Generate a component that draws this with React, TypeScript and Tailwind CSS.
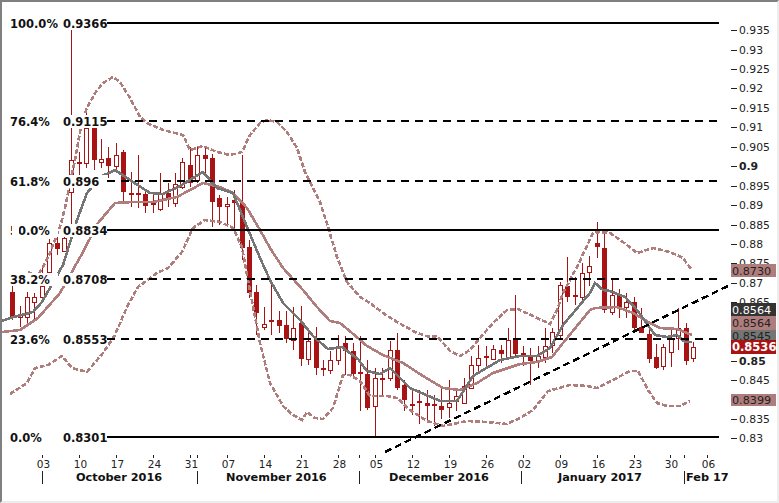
const RED = "#a81414";
const PALE = "#b07d7d";
const GRAY = "#757575";

type C = [string, number, number, number, number];
// type, wick top, wick bottom, body top, body bottom; bar k = index - 4
const candles: C[] = [
  ["f",286,320,292,318],["h",306,327,314,317],["h",292,325,297,317],["h",293,322,297,302],
  ["h",265,297,286,297],["h",239,272,243,272],["f",227,255,243,249],["h",225,251,238,251],
  ["h",30,226,160,192],["f",152,178,162,164],["h",108,168,128,163],["f",115,170,128,160],
  ["h",139,168,159,162],["f",147,178,158,166],["h",143,170,155,166],["f",150,202,152,192],
  ["f",172,207,193,195],["f",155,208,193,195],["f",190,213,194,206],["f",192,213,203,205],
  ["h",173,211,193,209],["f",183,207,193,199],["h",173,207,184,203],["h",158,189,162,187],
  ["f",147,187,165,183],["h",147,183,155,180],["f",147,175,155,159],["f",154,227,158,202],
  ["f",195,225,198,207],["h",197,225,204,206],["f",190,228,200,203],["f",155,260,203,248],
  ["f",240,298,247,293],["f",285,335,292,313],["h",307,330,324,327],["f",282,335,320,322],
  ["f",311,333,320,326],["f",311,343,325,339],["h",307,350,328,340],["f",306,366,323,359],
  ["h",332,365,341,359],["f",327,375,338,368],["f",360,376,368,370],["h",351,374,360,370],
  ["h",335,365,346,360],["f",336,375,343,351],["f",343,378,351,374],["f",336,411,372,374],
  ["f",360,410,374,408],["h",368,436,378,406],["f",368,396,378,380],["h",341,381,350,378],
  ["f",333,390,350,388],["f",380,411,385,400],["f",388,415,404,406],["f",390,424,401,403],
  ["f",390,423,403,406],["f",395,426,404,406],["f",388,419,406,410],["h",380,418,403,407],
  ["h",388,411,396,401],["h",378,403,386,403],["h",356,388,365,388],["h",345,374,358,365],
  ["f",346,368,356,358],["h",345,359,349,359],["f",345,363,350,354],["h",328,357,340,357],
  ["f",295,356,340,354],["f",346,366,353,357],["f",348,385,355,361],["h",346,368,356,360],
  ["h",328,363,346,357],["h",328,353,332,345],["h",282,340,285,335],["f",257,302,286,297],
  ["f",277,305,295,297],["h",263,301,273,297],["h",256,286,266,272],["f",222,258,243,247],
  ["f",233,313,248,310],["h",280,315,295,312],["f",289,318,294,309],["h",293,318,302,307],
  ["f",297,330,302,328],["f",308,333,327,333],["f",328,363,334,359],["f",344,369,357,368],
  ["h",344,370,347,366],["h",327,367,338,352],["h",308,350,328,338],["f",323,365,328,361],
  ["h",342,362,347,358],
];

const upper = "28,272 37,277 43,267 50,253 60,227 65,208 70,183 75,160 80,132 86,110 95,93 103,83 113,77 120,82 130,98 140,117 147,123 163,130 183,135 190,150 203,146 217,152 230,155 242,152 250,135 260,123 267,120 277,122 287,132 297,148 305,172 320,202 328,227 337,257 347,282 360,297 370,303 383,313 397,322 417,333 430,337 437,336 450,351 460,356 470,350 480,338 493,323 507,310 518,309 537,318 550,324 557,310 563,293 578,265 593,233 600,232 610,233 623,242 637,253 653,248 670,252 683,258 691,269";
const lower = "10,394 27,383 35,368 48,365 62,356 72,368 87,372 103,353 115,335 127,307 138,287 157,273 168,268 182,252 193,228 205,220 220,222 233,228 242,247 248,280 260,343 270,383 283,406 293,415 302,420 307,412 315,418 323,419 333,408 343,375 350,375 360,381 370,396 387,396 397,398 410,410 427,421 443,426 467,421 487,422 507,424 520,418 533,410 548,391 570,385 587,386 597,388 613,380 630,371 638,371 648,390 657,403 667,406 680,406 690,401";
const fast = "2,321 10,318 33,312 42,302 63,265 77,220 87,193 100,177 115,170 133,182 150,193 163,194 180,186 203,172 217,188 233,193 247,227 260,258 270,280 283,303 300,320 313,336 328,349 342,347 358,359 367,371 380,374 390,368 410,388 440,401 457,401 473,376 500,360 520,356 537,356 550,348 563,325 590,293 595,283 603,290 610,291 625,297 637,310 655,335 667,337 677,335 685,342 692,342";
const slow = "2,332 20,330 38,318 60,293 83,252 98,223 115,203 133,202 153,202 177,197 203,183 220,187 233,193 247,208 260,230 270,248 283,268 303,290 317,307 330,321 340,323 352,333 367,346 383,355 403,363 423,376 443,388 460,390 477,383 493,373 520,364 537,362 552,357 563,343 590,310 595,308 617,307 633,313 650,323 660,328 677,329 692,335";

const fibs: [number, string, string, boolean][] = [
  [23, "100.0%", "0.9366", true],
  [121, "76.4%", "0.9115", false],
  [181, "61.8%", "0.896", false],
  [230, "50.0%", "0.8834", true],
  [279, "38.2%", "0.8708", false],
  [339, "23.6%", "0.8553", false],
  [437, "0.0%", "0.8301", true],
];

const ticks: [number, string, boolean?][] = [
  [30,"0.935"],[50,"0.93"],[69,"0.925"],[88,"0.92"],[108,"0.915"],[127,"0.91"],[147,"0.905"],
  [166,"0.9",true],[186,"0.895"],[205,"0.89"],[225,"0.885"],[244,"0.88"],[263,"0.875"],[283,"0.87"],
  [302,"0.865"],[361,"0.85",true],[380,"0.845"],[419,"0.835"],[438,"0.83"],
];

const dates: [number, string][] = [
  [43,"03"],[80,"10"],[117,"17"],[154,"24"],[191,"31"],[228,"07"],[265,"14"],[302,"21"],[339,"28"],
  [376,"05"],[413,"12"],[450,"19"],[487,"26"],[524,"02"],[561,"09"],[598,"16"],[635,"23"],[671,"30"],[708,"06"],
];

const tags: [number, number, string, string, string, boolean?][] = [
  [264, 13, "0.8730", PALE, "#222"],
  [303, 13, "0.8564", "#333333", "#fff"],
  [316, 14, "0.8564", PALE, "#222"],
  [330, 11, "0.8545", GRAY, "#222"],
  [340, 14, "0.8536", RED, "#fff", true],
  [394, 12, "0.8399", PALE, "#222"],
];

export default function App() {
  return (
    <div className="flex h-[503px] w-[779px] border-t-2 border-r-2 border-b-2 border-l-2 border-t-[#808080] border-r-[#ececec] border-b-[#ececec] border-l-[#808080] bg-white font-['DejaVu_Sans',sans-serif]">
      <svg width="775" height="499" viewBox="2 2 775 499" className="block">
        {candles.map(([t, wt, wb, bt, bb], i) => {
          const x = Math.round(41.8 + 7.4 * (i - 4));
          return (
            <g key={i} shapeRendering="crispEdges">
              <rect x={x} y={wt} width="1" height={wb - wt} fill={RED} />
              {t === "f" ? (
                <rect x={x - 2} y={bt} width="5" height={bb - bt} fill={RED} />
              ) : (
                <rect x={x - 2} y={bt} width="4" height={Math.max(bb - bt, 2)} fill="#fff" stroke={RED} strokeWidth="1" />
              )}
            </g>
          );
        })}
        <polyline points={upper} fill="none" stroke={PALE} strokeWidth="2.6" strokeDasharray="5 2" shapeRendering="crispEdges" />
        <polyline points={lower} fill="none" stroke={PALE} strokeWidth="2.6" strokeDasharray="5 2" shapeRendering="crispEdges" />
        <polyline points={slow} fill="none" stroke={PALE} strokeWidth="2.6" shapeRendering="crispEdges" />
        <polyline points={fast} fill="none" stroke={GRAY} strokeWidth="2.6" shapeRendering="crispEdges" />

        {fibs.map(([y, , , solid]) => (
          <line key={y} x1="107" x2="719" y1={y} y2={y} stroke="#000" strokeWidth="2" strokeDasharray={solid ? undefined : "8 6"} shapeRendering="crispEdges" />
        ))}
        <line x1="385" y1="452" x2="730" y2="285" stroke="#000" strokeWidth="2.4" strokeDasharray="7 4" shapeRendering="crispEdges" />

        {fibs.map(([y, pct, val]) => (
          <g key={y}>
            <rect x="10" y={y - 6} width="48" height="13" fill="#fff" />
            <rect x="62" y={y - 6} width="45" height="13" fill="#fff" />
            <text x="10" y={y + 5} fontSize="11.5" fontWeight="700" fill="#111">{pct}</text>
            <text x="63" y={y + 5} fontSize="11.5" fontWeight="700" fill="#111">{val}</text>
          </g>
        ))}
        <rect x="12" y="224" width="7" height="13" fill="#fff" />

        {ticks.map(([y, label, bold]) => (
          <g key={y}>
            <rect x="731" y={y - 0.5} width="6" height="1" fill="#222" shapeRendering="crispEdges" />
            <text x="739" y={y + 4} fontSize="10.8" fontWeight={bold ? 700 : 400} fill="#222">{label}</text>
          </g>
        ))}
        {tags.map(([y, h, label, bg, fg, bold]) => (
          <g key={y + label}>
            <rect x="731" y={y} width="45" height={h} fill={bg} />
            <text x="732" y={y + h / 2 + 4} fontSize={bold ? 11.5 : 11.2} fontWeight={bold ? 700 : 400} fill={fg}>{label}</text>
          </g>
        ))}

        {dates.map(([x, label]) => (
          <g key={label + x}>
            <rect x={x - 1} y="455" width="1" height="3" fill="#222" shapeRendering="crispEdges" />
            <text x={x + 0.5} y="468" textAnchor="middle" fontSize="10.5" fill="#222">{label}</text>
          </g>
        ))}
        {[197, 359, 684].map((x) => (
          <rect key={x} x={x} y="455" width="1" height="3" fill="#222" shapeRendering="crispEdges" />
        ))}
        {[42, 197, 359, 521, 684].map((x) => (
          <rect key={x} x={x} y="471" width="1" height="13" fill="#222" shapeRendering="crispEdges" />
        ))}
        <text x="76" y="481" fontSize="11.3" fontWeight="700" fill="#111">October 2016</text>
        <text x="226" y="481" fontSize="11.3" fontWeight="700" fill="#111">November 2016</text>
        <text x="389" y="481" fontSize="11.3" fontWeight="700" fill="#111">December 2016</text>
        <text x="558" y="481" fontSize="11.3" fontWeight="700" fill="#111">January 2017</text>
        <text x="686" y="481" fontSize="11.3" fontWeight="700" fill="#111">Feb 17</text>
      </svg>
    </div>
  );
}
